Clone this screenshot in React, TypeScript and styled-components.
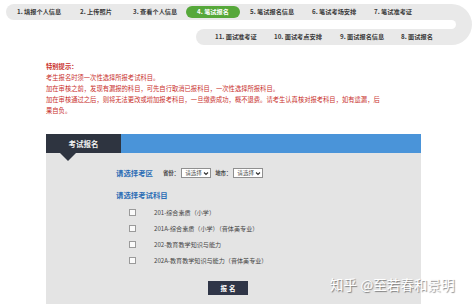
import React from "react";
import styled, { createGlobalStyle } from "styled-components";

const Global = createGlobalStyle`
  html, body { margin: 0; padding: 0; background: #fff; }
  body {
    width: 474px; height: 308px; overflow: hidden;
    font-family: "Noto Sans CJK SC", "Noto Sans", sans-serif;
    color: #333;
  }
`;

const Page = styled.div`
  position: relative;
  width: 474px;
  height: 308px;
  overflow: hidden;
`;

/* ---------- step track ---------- */
const Track = styled.div`
  display: grid;
  grid-template-columns: 1fr 21px;
  grid-template-rows: 16px 9px 16px;
  margin: 4px 2px 0 6px;
`;

const TrackRow = styled.div<{ $row: number; $indent: number }>`
  grid-column: 1;
  grid-row: ${(p) => p.$row};
  margin-left: ${(p) => p.$indent}px;
  display: flex;
  align-items: center;
  background: #e9e9e9;
  border-radius: 8px 0 0 8px;
  padding-left: ${(p) => (p.$row === 1 ? 11 : 19)}px;
`;

const Slot = styled.div`
  grid-column: 1;
  grid-row: 2;
  margin-left: 190px;
  margin-right: -5px;
  background: #fff;
  border-radius: 0 4.5px 4.5px 0;
  position: relative;
  z-index: 1;
`;

const Turn = styled.div`
  grid-column: 2;
  grid-row: 1 / 4;
  background: #e9e9e9;
  border-radius: 0 21px 21px 0;
`;

const Step = styled.div<{ $w?: number; $active?: boolean }>`
  flex: none;
  width: ${(p) => (p.$w ? `${p.$w}px` : "auto")};
  font-size: 6.2px;
  font-weight: 700;
  line-height: 12px;
  white-space: nowrap;
  color: ${(p) => (p.$active ? "#fff" : "#3a3a3a")};
  ${(p) =>
    p.$active &&
    `
    background: #56a83a;
    border-radius: 6px;
    text-align: center;
    margin-right: 10px;
  `}
`;

/* ---------- notice ---------- */
const Notice = styled.div`
  margin: 16px 0 0 46px;
  font-size: 6.3px;
  line-height: 11px;
  color: #c9302c;
  white-space: nowrap;
`;

const NoticeTitle = styled.div`
  font-weight: 700;
`;

/* ---------- panel ---------- */
const Panel = styled.div`
  margin: 18px 0 0 46px;
  width: 375px;
`;

const PanelHead = styled.div`
  display: flex;
  height: 19px;
  background: #4a94d9;
`;

const HeadTab = styled.div`
  position: relative;
  width: 75px;
  background: #2e3440;
  color: #f2f2f2;
  font-size: 7.5px;
  font-weight: 700;
  display: flex;
  align-items: center;
  justify-content: center;
  &::after {
    content: "";
    position: absolute;
    left: 14px;
    top: 19px;
    border-left: 8px solid transparent;
    border-right: 8px solid transparent;
    border-top: 8px solid #2e3440;
  }
`;

const PanelBody = styled.div`
  background: #e4e4e4;
  height: 151px;
  box-sizing: border-box;
  padding: 14px 0 0 70px;
  display: flex;
  flex-direction: column;
  align-items: flex-start;
`;

const ZoneRow = styled.div`
  display: flex;
  align-items: center;
  height: 12px;
`;

const SectionTitle = styled.div<{ $gap?: number }>`
  font-size: 7.4px;
  font-weight: 700;
  color: #2c6db5;
  line-height: 12px;
  margin-top: ${(p) => p.$gap ?? 0}px;
`;

const SmallLabel = styled.span<{ $left: number }>`
  font-size: 5.4px;
  font-weight: 700;
  color: #444;
  margin-left: ${(p) => p.$left}px;
  margin-right: 2px;
`;

const FakeSelect = styled.div`
  width: 30px;
  height: 10px;
  box-sizing: border-box;
  border: 1px solid #8f8f8f;
  background: #fff;
  display: flex;
  align-items: center;
  justify-content: space-between;
  padding: 0 1px 0 3px;
  font-size: 5.6px;
  color: #555;
`;

const SubjectList = styled.div`
  margin-top: 3px;
  display: flex;
  flex-direction: column;
`;

const SubjectRow = styled.label`
  display: flex;
  align-items: center;
  height: 16px;
  padding-left: 13px;
`;

const Box = styled.span`
  width: 7px;
  height: 7px;
  box-sizing: border-box;
  border: 1px solid #9a9a9a;
  background: #fafafa;
  margin-right: 18px;
`;

const SubjectText = styled.span`
  font-size: 6.1px;
  color: #444;
  white-space: nowrap;
`;

const SubmitButton = styled.button`
  margin: 13px 0 0 92px;
  width: 40px;
  height: 14px;
  padding: 0;
  border: none;
  background: #2f3547;
  color: #fff;
  font-family: inherit;
  font-size: 6.5px;
  font-weight: 700;
  letter-spacing: 2px;
  text-indent: 2px;
`;

const Watermark = styled.div`
  position: absolute;
  left: 330px;
  top: 274px;
  font-size: 13.4px;
  color: #fff;
  white-space: nowrap;
  text-shadow: 1px 1px 1px rgba(0, 0, 0, 0.45);
  letter-spacing: 0.2px;
`;

const Chevron = () => (
  <svg width="6" height="5" viewBox="0 0 6 5">
    <path d="M1 1.5 L3 3.5 L5 1.5" fill="none" stroke="#333" strokeWidth="1.1" />
  </svg>
);

const topSteps = [
  { t: "1. 填报个人信息", w: 63 },
  { t: "2. 上传照片", w: 53 },
  { t: "3. 查看个人信息", w: 53 },
  { t: "4. 笔试报名", w: 54, active: true },
  { t: "5. 笔试报名信息", w: 62 },
  { t: "6. 笔试考场安排", w: 62 },
  { t: "7. 笔试准考证" },
];

const bottomSteps = [
  { t: "11. 面试准考证", w: 59 },
  { t: "10. 面试考点安排", w: 66 },
  { t: "9. 面试报名信息", w: 61 },
  { t: "8. 面试报名" },
];

const subjects = [
  "201-综合素质（小学）",
  "201A-综合素质（小学）（音体美专业）",
  "202-教育教学知识与能力",
  "202A-教育教学知识与能力（音体美专业）",
];

export default function App() {
  return (
    <Page>
      <Global />
      <Track>
        <TrackRow $row={1} $indent={0}>
          {topSteps.map((s) => (
            <Step key={s.t} $w={s.w} $active={s.active}>
              {s.t}
            </Step>
          ))}
        </TrackRow>
        <Slot />
        <TrackRow $row={3} $indent={190}>
          {bottomSteps.map((s) => (
            <Step key={s.t} $w={s.w}>
              {s.t}
            </Step>
          ))}
        </TrackRow>
        <Turn />
      </Track>

      <Notice>
        <NoticeTitle>特别提示：</NoticeTitle>
        <div>考生报名时须一次性选择所报考试科目。</div>
        <div>加在审核之前，发现有漏报的科目，可先自行取消已报科目，一次性选择所报科目。</div>
        <div>加在审核通过之后，则将无法更改或增加报考科目，一旦缴费成功，概不退费。请考生认真核对报考科目，如有遗漏，后</div>
        <div>果自负。</div>
      </Notice>

      <Panel>
        <PanelHead>
          <HeadTab>考试报名</HeadTab>
        </PanelHead>
        <PanelBody>
          <ZoneRow>
            <SectionTitle>请选择考区</SectionTitle>
            <SmallLabel $left={10}>省份：</SmallLabel>
            <FakeSelect>
              请选择
              <Chevron />
            </FakeSelect>
            <SmallLabel $left={4}>地市：</SmallLabel>
            <FakeSelect>
              请选择
              <Chevron />
            </FakeSelect>
          </ZoneRow>
          <SectionTitle $gap={10}>请选择考试科目</SectionTitle>
          <SubjectList>
            {subjects.map((s) => (
              <SubjectRow key={s}>
                <Box />
                <SubjectText>{s}</SubjectText>
              </SubjectRow>
            ))}
          </SubjectList>
          <SubmitButton>报名</SubmitButton>
        </PanelBody>
      </Panel>

      <Watermark>知乎 @至若春和景明</Watermark>
    </Page>
  );
}
